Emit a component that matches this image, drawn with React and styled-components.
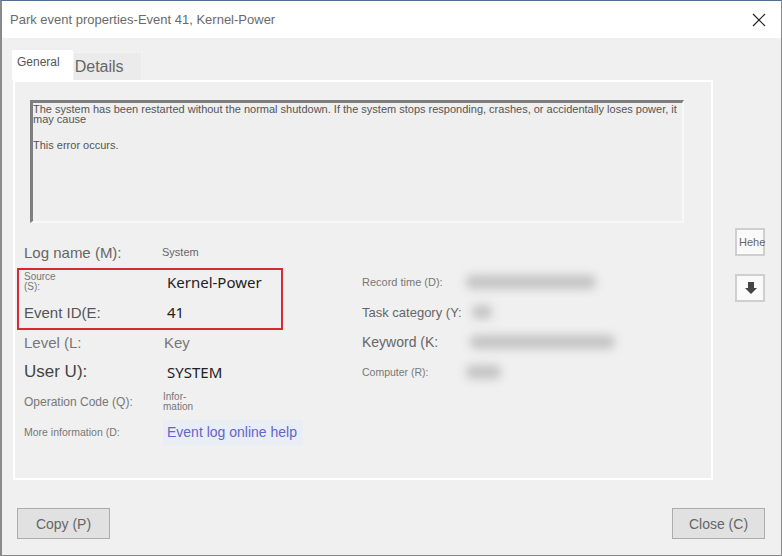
import styled, { createGlobalStyle } from "styled-components";

const GlobalStyle = createGlobalStyle`
  html, body {
    margin: 0;
    padding: 0;
    background: #f0f0f0;
  }
  body {
    font-family: "Liberation Sans", Arial, sans-serif;
  }
`;

const Window = styled.div`
  width: 782px;
  height: 556px;
  box-sizing: border-box;
  display: flex;
  flex-direction: column;
  background: #f0f0f0;
  border: 1px solid #8a8a8a;
  border-left-width: 2px;
  border-top-color: #4f6f92;
`;

const TitleBar = styled.div`
  height: 37px;
  flex-shrink: 0;
  background: #ffffff;
  display: flex;
  align-items: center;
  justify-content: space-between;
  padding: 0 14px 0 8px;
`;

const Title = styled.span`
  font-size: 13px;
  color: #6a6a6a;
`;

const CloseX = styled.button`
  width: 16px;
  height: 16px;
  padding: 0;
  border: none;
  background: transparent;
  display: flex;
  align-items: center;
  justify-content: center;
`;

const Body = styled.div`
  flex: 1;
  display: flex;
  flex-direction: column;
  padding: 12px 16px 0 10px;
`;

const MainRow = styled.div`
  display: flex;
  gap: 22px;
`;

const TabArea = styled.div`
  width: 701px;
  display: flex;
  flex-direction: column;
`;

const TabStrip = styled.div`
  display: flex;
  align-items: flex-end;
  height: 30px;
`;

const Tab = styled.div`
  height: ${p => (p.active ? "30px" : "28px")};
  padding: ${p => (p.active ? "4px 13px 0 5px" : "3px 17px 0 1px")};
  box-sizing: border-box;
  background: ${p => (p.active ? "#ffffff" : "#ebebeb")};
  border: ${p => (p.active ? "none" : "1px dotted #f8f8f8")};
  border-bottom: none;
  font-size: ${p => (p.active ? "12px" : "16px")};
  color: ${p => (p.active ? "#555" : "#666")};
  line-height: ${p => (p.active ? "16px" : "22px")};
`;

const Panel = styled.div`
  height: 400px;
  box-sizing: border-box;
  margin-left: 1px;
  border: 2px solid #ffffff;
  background: #f0f0f0;
  padding: 18px 0 0 9px;
  display: flex;
  flex-direction: column;
`;

const MessageBox = styled.div`
  margin-left: 6px;
  width: 654px;
  height: 123px;
  box-sizing: border-box;
  border-top: 3px solid #7e7e7e;
  border-left: 3px solid #7e7e7e;
  border-right: 2px solid #f8f8f8;
  border-bottom: 2px solid #f8f8f8;
  background: #efefef;
  padding: 1px 4px 0 0;
  font-size: 11px;
  line-height: 10px;
  color: #555;
`;

const Para = styled.p`
  margin: 0 0 16px 0;
`;

const Grid = styled.div`
  margin-top: 14px;
  display: grid;
  grid-template-columns: 139px 199px 94px 1fr;
  grid-auto-rows: 30px;
  align-items: center;
`;

const Label = styled.div`
  grid-column: ${p => p.col};
  grid-row: ${p => p.row};
  font-size: ${p => p.size}px;
  line-height: ${p => (p.size < 11 ? "10px" : "normal")};
  color: ${p => p.color || "#666"};
  white-space: nowrap;
`;

const Value = styled.div`
  grid-column: ${p => p.col};
  grid-row: ${p => p.row};
  font-family: ${p => (p.strong ? '"Noto Sans", "Open Sans", sans-serif' : '"Liberation Sans", Arial, sans-serif')};
  font-size: ${p => p.size}px;
  line-height: ${p => (p.size < 11 ? "10px" : "normal")};
  color: ${p => p.color || "#222"};
  margin-left: ${p => p.shift || 0}px;
  white-space: nowrap;
`;

const Highlight = styled.div`
  grid-column: 1 / 3;
  grid-row: 2 / 4;
  align-self: stretch;
  margin: 1px 0 -3px -7px;
  width: 266px;
  box-sizing: border-box;
  border: 2px solid #d42a35;
  pointer-events: none;
`;

const LinkValue = styled.a`
  grid-column: 2;
  grid-row: 7;
  justify-self: start;
  padding: 4px 6px 5px 4px;
  background: rgba(228, 236, 250, 0.6);
  font-size: 14px;
  color: #6464c8;
  text-decoration: none;
`;

const Blurred = styled.div`
  grid-column: 4;
  grid-row: ${p => p.row};
  width: ${p => p.w}px;
  height: 14px;
  margin-left: ${p => p.ml || 0}px;
  background: #c4c4c4;
  filter: blur(5px);
  border-radius: 6px;
`;

const SideColumn = styled.div`
  display: flex;
  flex-direction: column;
  gap: 18px;
  padding-top: 178px;
`;

const SideButton = styled.button`
  width: 30px;
  height: 28px;
  box-sizing: border-box;
  padding: 0 0 0 2px;
  border: 2px solid #cfcfcf;
  background: #fafafa;
  font-family: "Liberation Sans", Arial, sans-serif;
  font-size: 11px;
  color: #666;
  overflow: visible;
  display: flex;
  align-items: center;
  justify-content: ${p => (p.icon ? "center" : "flex-start")};
`;

const Footer = styled.div`
  display: flex;
  justify-content: space-between;
  padding: 28px 0 0 5px;
`;

const FooterButton = styled.button`
  width: 93px;
  height: 31px;
  box-sizing: border-box;
  border: 1px solid #acacac;
  background: #e1e1e1;
  font-family: "Liberation Sans", Arial, sans-serif;
  font-size: 14px;
  color: #666;
`;

export default function App() {
  return (
    <>
      <GlobalStyle />
      <Window>
        <TitleBar>
          <Title>Park event properties-Event 41, Kernel-Power</Title>
          <CloseX aria-label="close">
            <svg width="14" height="14" viewBox="0 0 14 14">
              <path d="M1 1 L13 13 M13 1 L1 13" stroke="#222" strokeWidth="1.2" />
            </svg>
          </CloseX>
        </TitleBar>
        <Body>
          <MainRow>
            <TabArea>
              <TabStrip>
                <Tab active>General</Tab>
                <Tab>Details</Tab>
              </TabStrip>
              <Panel>
                <MessageBox>
                  <Para>
                    The system has been restarted without the normal shutdown. If the system stops responding, crashes, or accidentally loses power, it may cause
                  </Para>
                  <Para>This error occurs.</Para>
                </MessageBox>
                <Grid>
                  <Label col={1} row={1} size={15}>Log name (M):</Label>
                  <Value col={2} row={1} size={11} color="#666" shift={-1}>System</Value>

                  <Label col={1} row={2} size={10} color="#777">Source<br />(S):</Label>
                  <Value col={2} row={2} size={15} strong shift={4}>Kernel-Power</Value>
                  <Label col={3} row={2} size={11} color="#777">Record time (D):</Label>
                  <Blurred row={2} w={130} ml={10} />

                  <Label col={1} row={3} size={15} color="#555">Event ID(E:</Label>
                  <Value col={2} row={3} size={15} strong shift={4}>41</Value>
                  <Label col={3} row={3} size={13} color="#666">Task category (Y:</Label>
                  <Blurred row={3} w={20} ml={16} />

                  <Label col={1} row={4} size={15} color="#777">Level (L:</Label>
                  <Value col={2} row={4} size={15} color="#777" shift={1}>Key</Value>
                  <Label col={3} row={4} size={14} color="#666">Keyword (K:</Label>
                  <Blurred row={4} w={145} ml={14} />

                  <Label col={1} row={5} size={17} color="#444">User U):</Label>
                  <Value col={2} row={5} size={15} strong shift={4}>SYSTEM</Value>
                  <Label col={3} row={5} size={10.5} color="#777">Computer (R):</Label>
                  <Blurred row={5} w={35} ml={10} />

                  <Label col={1} row={6} size={12} color="#777">Operation Code (Q):</Label>
                  <Value col={2} row={6} size={10} color="#777">Infor-<br />mation</Value>

                  <Label col={1} row={7} size={10.5} color="#777">More information (D:</Label>
                  <LinkValue href="#">Event log online help</LinkValue>

                  <Highlight />
                </Grid>
              </Panel>
            </TabArea>
            <SideColumn>
              <SideButton>Hehe</SideButton>
              <SideButton icon aria-label="down">
                <svg width="14" height="14" viewBox="0 0 14 14">
                  <path d="M4 1 H10 V7 H13 L7 13 L1 7 H4 Z" fill="#444" />
                </svg>
              </SideButton>
            </SideColumn>
          </MainRow>
          <Footer>
            <FooterButton>Copy (P)</FooterButton>
            <FooterButton>Close (C)</FooterButton>
          </Footer>
        </Body>
      </Window>
    </>
  );
}
